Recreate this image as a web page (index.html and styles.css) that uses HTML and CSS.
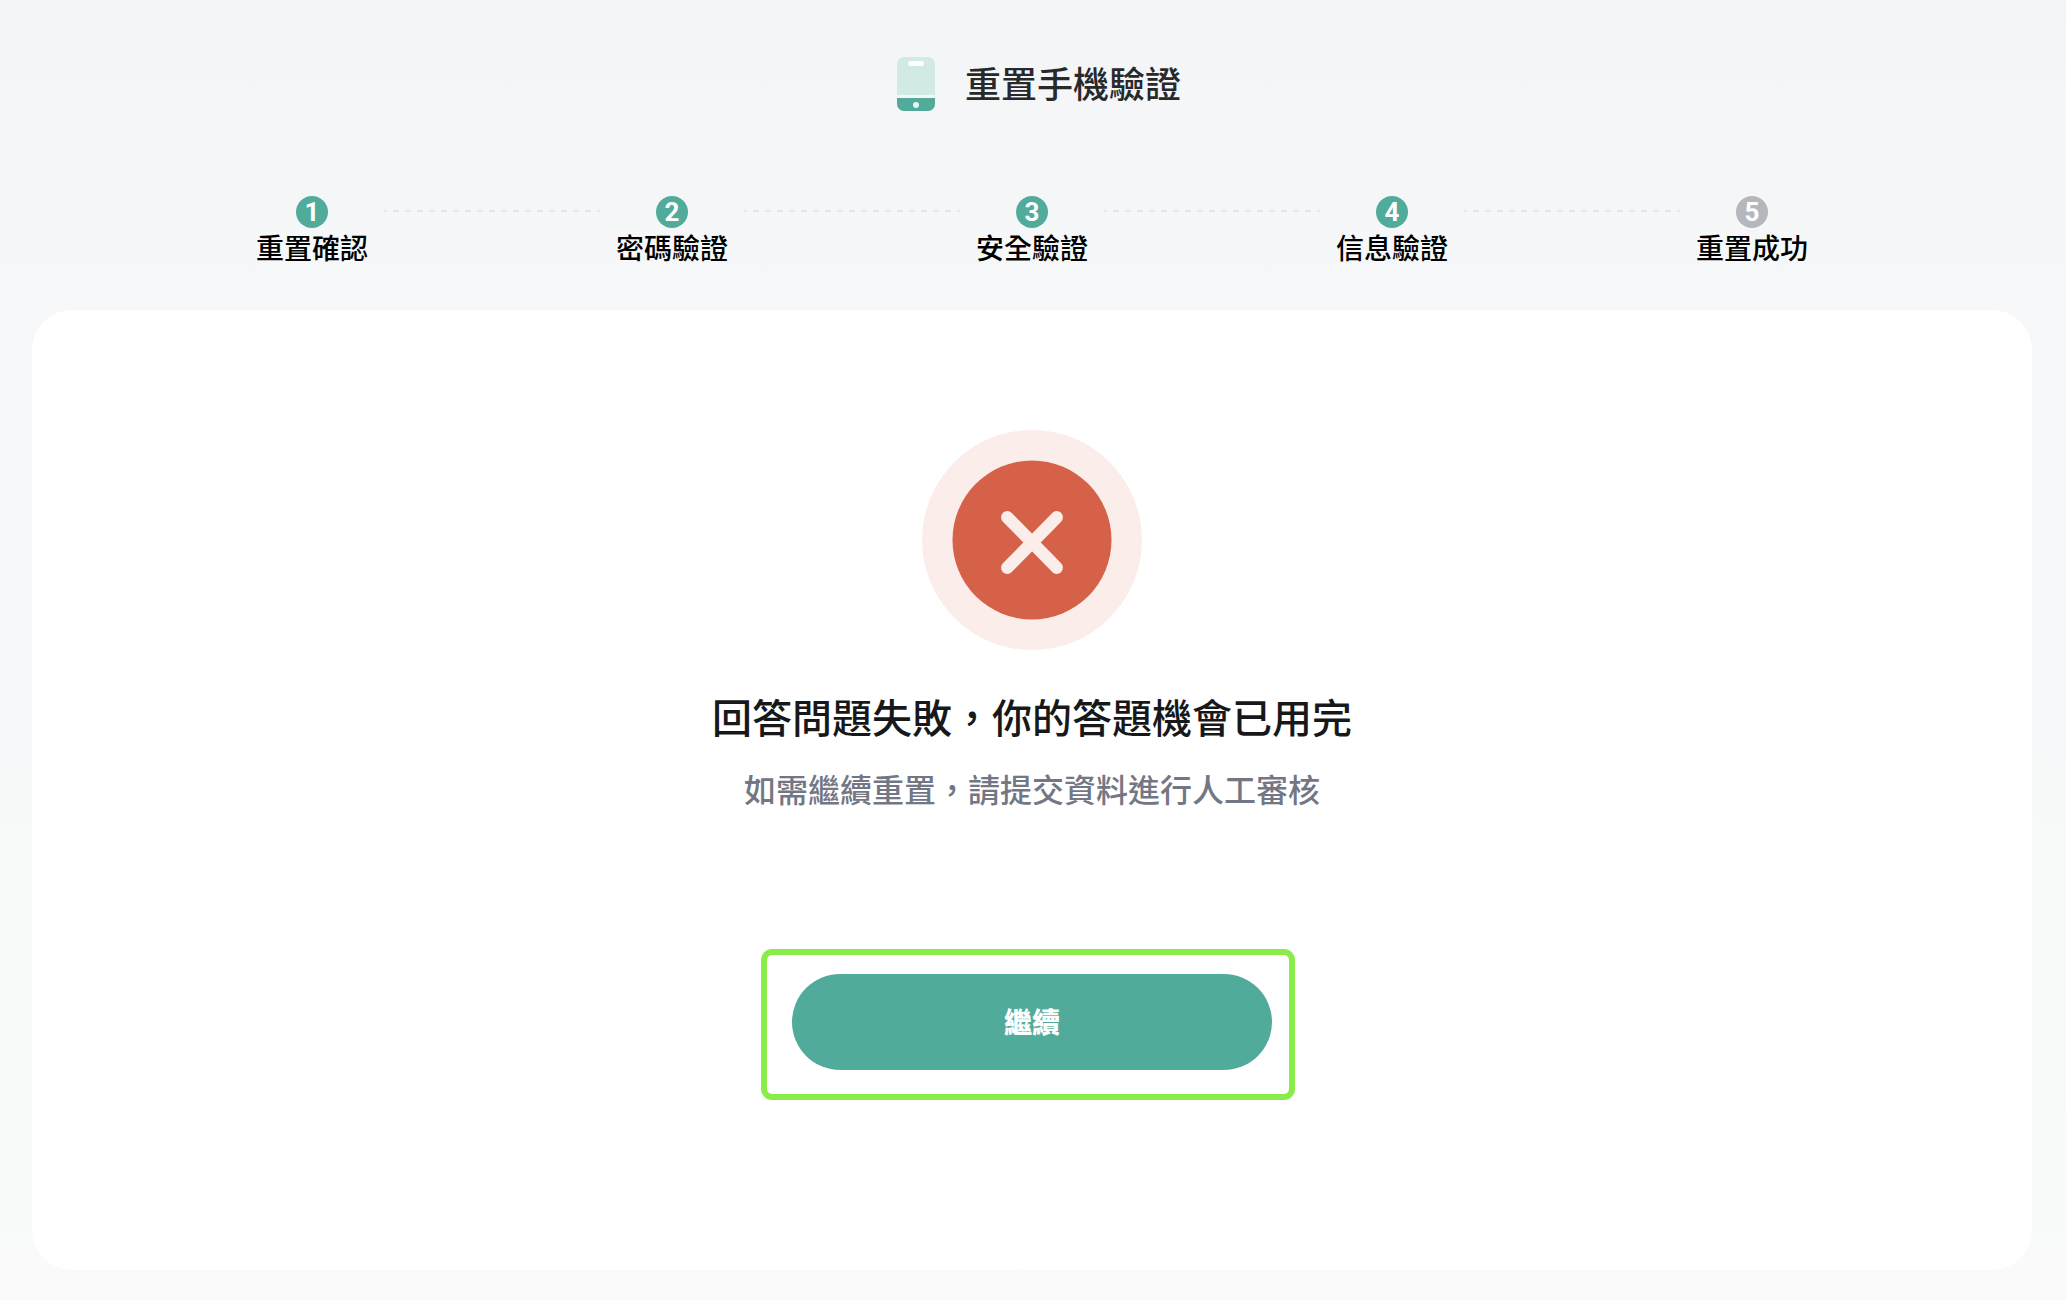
FILE: index.html
```html
<!DOCTYPE html>
<html lang="zh-Hant">
<head>
  <meta charset="UTF-8" />
  <meta name="viewport" content="width=device-width, initial-scale=1.0"/>
  <title>重置手機驗證</title>
  <link rel="stylesheet" href="styles.css">
</head>
<body>
  <header class="page-header">
    <svg class="phone-icon" viewBox="0 0 64 64" aria-hidden="true">
      <path d="M14 43V12a7 7 0 0 1 7-7h24a7 7 0 0 1 7 7v31z" fill="#d2eae6"/>
      <rect x="25" y="9" width="16" height="5" rx="2.5" fill="#fff"/>
      <path d="M14 46h38v6a7 7 0 0 1-7 7H21a7 7 0 0 1-7-7z" fill="#51ab9a"/>
      <circle cx="33" cy="53" r="3" fill="#e6f5f2"/>
    </svg>
    <h1>重置手機驗證</h1>
  </header>

  <ol class="steps">
    <li class="step done"><span class="step-number">1</span><span class="step-label">重置確認</span></li>
    <li class="step done"><span class="step-number">2</span><span class="step-label">密碼驗證</span></li>
    <li class="step done"><span class="step-number">3</span><span class="step-label">安全驗證</span></li>
    <li class="step done"><span class="step-number">4</span><span class="step-label">信息驗證</span></li>
    <li class="step"><span class="step-number">5</span><span class="step-label">重置成功</span></li>
  </ol>

  <main class="result-card">
    <svg class="result-icon" viewBox="0 0 220 220" aria-hidden="true">
      <circle cx="110" cy="110" r="110" fill="#fbedea"/>
      <circle cx="110" cy="110" r="79.5" fill="#d56148"/>
      <path d="M85.3 87.3l49.4 50.4M134.7 87.3l-49.4 50.4" stroke="#fbedea" stroke-width="12.4" stroke-linecap="round"/>
    </svg>
    <h2>回答問題失敗，你的答題機會已用完</h2>
    <p class="result-hint">如需繼續重置，請提交資料進行人工審核</p>
    <div class="action">
      <button type="button" class="continue-btn">繼續</button>
    </div>
  </main>
</body>
</html>
```
FILE: styles.css
```css
* {
  box-sizing: border-box;
}

body {
  min-height: 100vh;
  margin: 0;
  padding: 52px 34px 30px 32px;
  font-family: "Noto Sans CJK TC", sans-serif;
  font-weight: 500;
  color: #17181a;
  background: linear-gradient(#f3f5f7, #f6f8f9 30%, #f9faf9);
}

h1, h2, p {
  margin: 0;
  font-weight: 500;
}

.page-header {
  display: flex;
  align-items: center;
  justify-content: center;
  gap: 18px;
}

.phone-icon {
  width: 64px;
  height: 64px;
}

.page-header h1 {
  padding-bottom: 4px;
  font-size: 36px;
  line-height: 48px;
  color: #27292b;
}

.steps {
  display: flex;
  margin: 80px 0 44px;
  padding: 0 5%;
  list-style: none;
}

.step {
  flex: 1;
  display: grid;
  grid-template-columns: 1fr 144px 1fr;
  justify-items: center;
}

.step-number {
  grid-column: 2;
  width: 32px;
  height: 32px;
  border-radius: 50%;
  background: #b6b7bd;
  color: #fff;
  font-family: Roboto, sans-serif;
  font-size: 26px;
  font-weight: 700;
  line-height: 32px;
  text-align: center;
}

.step.done .step-number {
  background: #51ab9a;
}

.step-label {
  grid-column: 2;
  font-size: 28px;
  line-height: 38px;
  color: #000;
  white-space: nowrap;
}

/* dashed connectors, each step draws its half */
.step:not(:first-child)::before,
.step:not(:last-child)::after {
  content: "";
  grid-row: 1;
  width: 100%;
  height: 2px;
  margin-top: 14px;
  background: repeating-linear-gradient(90deg, #e4e6eb 0 3px, transparent 3px 9px, #e4e6eb 9px 12px);
}

.step::before {
  grid-column: 1;
}

.step::after {
  grid-column: 3;
}

.result-card {
  display: flex;
  flex-direction: column;
  align-items: center;
  padding: 120px 32px 200px;
  border-radius: 40px;
  background: #fff;
}

.result-icon {
  width: 220px;
  height: 220px;
}

.result-card h2 {
  margin-top: 36px;
  font-size: 40px;
  line-height: 60px;
}

.result-hint {
  margin-top: 18px;
  font-size: 32px;
  line-height: 48px;
  color: #737785;
}

.action {
  position: relative;
  width: 480px;
  max-width: 100%;
  margin-top: 162px;
}

/* highlight frame around the button */
.action::after {
  content: "";
  position: absolute;
  top: -25px;
  right: -23px;
  bottom: -30px;
  left: -31px;
  border: 6px solid #8aec49;
  border-radius: 11px;
  pointer-events: none;
}

.continue-btn {
  display: block;
  width: 100%;
  height: 96px;
  padding: 0 0 2px;
  border: none;
  border-radius: 48px;
  background: #51ab9a;
  color: #fff;
  font-family: inherit;
  font-size: 28px;
  font-weight: 900;
  cursor: pointer;
}
```
